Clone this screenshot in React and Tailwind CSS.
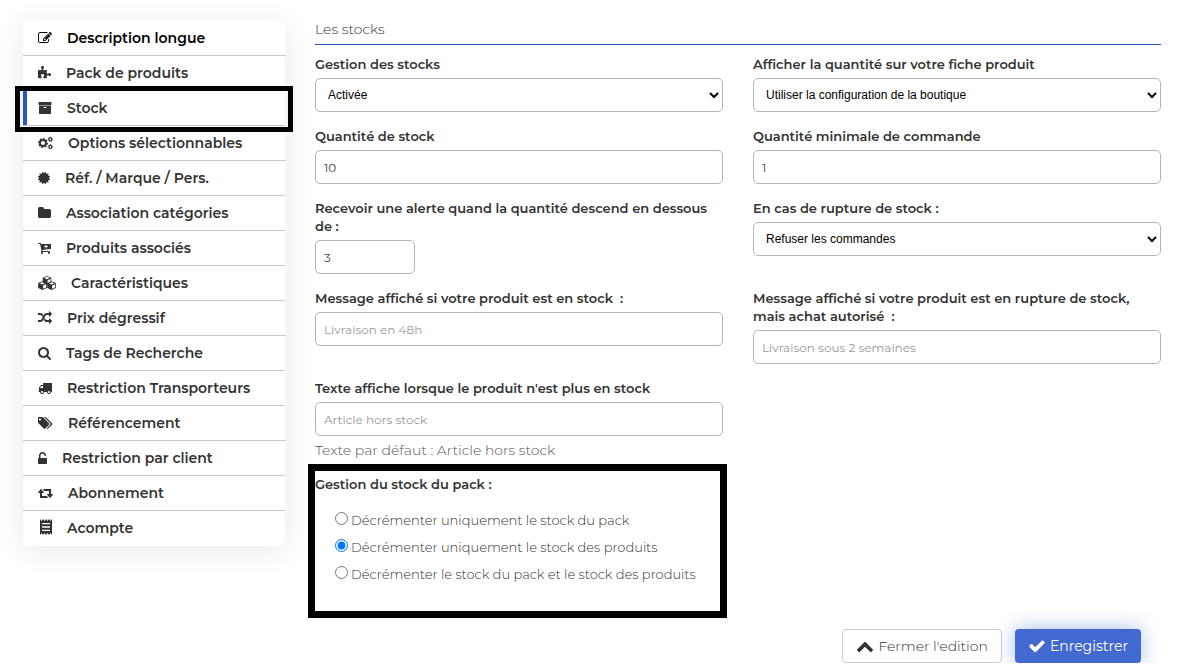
import { useState } from 'react';
import clsx from 'clsx';
import { FaCertificate } from 'react-icons/fa';

const PATHS = {
    edit: 'M888 1184l116-116-152-152-116 116v56h96v96h56zm440-720q-16-16-33 1l-350 350q-17 17-1 33t33-1l350-350q17-17 1-33zm80 594v190q0 119-84.5 203.5t-203.5 84.5h-832q-119 0-203.5-84.5t-84.5-203.5v-832q0-119 84.5-203.5t203.5-84.5h832q63 0 117 25 15 7 18 23 3 17-9 29l-49 49q-14 14-32 8-23-6-45-6h-832q-66 0-113 47t-47 113v832q0 66 47 113t113 47h832q66 0 113-47t47-113v-126q0-13 9-22l64-64q15-15 35-7t20 29zm-96-738l288 288-672 672h-288v-288zm444 132l-92 92-288-288 92-92q28-28 68-28t68 28l152 152q28 28 28 68t-28 68z',
    puzzle: 'M1728 1098q0 81-44.5 135t-123.5 54q-41 0-77.5-17.5t-59-38-56.5-38-71-17.5q-110 0-110 124 0 39 16 115t15 115v5q-22 0-33 1-34 3-97.5 11.5t-115.5 13.5-98 5q-61 0-103-26.5t-42-83.5q0-37 17.5-71t38-56.5 38-59 17.5-77.5q0-79-54-123.5t-135-44.5q-84 0-143 45.5t-59 127.5q0 43 15 83t33.5 64.5 33.5 53 15 50.5q0 45-46 89-37 35-117 35-95 0-245-24-9-2-27.5-4t-27.5-4l-13-2q-1 0-3-1-2 0-2-1v-1024q2 1 17.5 3.5t34 5 21.5 3.5q150 24 245 24 80 0 117-35 46-44 46-89 0-22-15-50.5t-33.5-53-33.5-64.5-15-83q0-82 59-127.5t144-45.5q80 0 134 44.5t54 123.5q0 41-17.5 77.5t-38 59-38 56.5-17.5 71q0 57 42 83.5t103 26.5q64 0 180-15t163-17v2q-1 2-3.5 17.5t-5 34-3.5 21.5q-24 150-24 245 0 80 35 117 44 46 89 46 22 0 50.5-15t53-33.5 64.5-33.5 83-15q82 0 127.5 59t45.5 143z',
    archive: 'M1088 832q0-26-19-45t-45-19h-256q-26 0-45 19t-19 45 19 45 45 19h256q26 0 45-19t19-45zm576-192v960q0 26-19 45t-45 19h-1408q-26 0-45-19t-19-45v-960q0-26 19-45t45-19h1408q26 0 45 19t19 45zm64-448v256q0 26-19 45t-45 19h-1536q-26 0-45-19t-19-45v-256q0-26 19-45t45-19h1536q26 0 45 19t19 45z',
    folder: 'M1728 608v704q0 92-66 158t-158 66h-1216q-92 0-158-66t-66-158v-960q0-92 66-158t158-66h320q92 0 158 66t66 158v32h672q92 0 158 66t66 158z',
    cart: 'M1280 704q0-26-19-45t-45-19h-128v-128q0-26-19-45t-45-19-45 19-19 45v128h-128q-26 0-45 19t-19 45 19 45 45 19h128v128q0 26 19 45t45 19 45-19 19-45v-128h128q26 0 45-19t19-45zm-640 832q0 53-37.5 90.5t-90.5 37.5-90.5-37.5-37.5-90.5 37.5-90.5 90.5-37.5 90.5 37.5 37.5 90.5zm896 0q0 53-37.5 90.5t-90.5 37.5-90.5-37.5-37.5-90.5 37.5-90.5 90.5-37.5 90.5 37.5 37.5 90.5zm128-1088v512q0 24-16 42.5t-41 21.5l-1044 122q1 7 4.5 21.5t6 26.5 2.5 22q0 16-24 64h920q26 0 45 19t19 45-19 45-45 19h-1024q-26 0-45-19t-19-45q0-14 11-39.5t29.5-59.5 20.5-38l-177-823h-204q-26 0-45-19t-19-45 19-45 45-19h256q16 0 28.5 6.5t20 15.5 13 24.5 7.5 26.5 5.5 29.5 4.5 25.5h1201q26 0 45 19t19 45z',
    random: 'M666 481q-60 92-137 273-22-45-37-72.5t-40.5-63.5-51-56.5-63-35-81.5-14.5h-224q-14 0-23-9t-9-23v-192q0-14 9-23t23-9h224q250 0 410 225zm1126 799q0 14-9 23l-320 320q-9 9-23 9-13 0-22.5-9.5t-9.5-22.5v-192q-32 0-85 .5t-81 1-73-1-71-5-64-10.5-63-18.5-58-28.5-59-40-55-53.5-56-69.5q59-93 136-273 22 45 37 72.5t40.5 63.5 51 56.5 63 35 81.5 14.5h256v-192q0-14 9-23t23-9q12 0 24 10l319 319q9 9 9 23zm0-896q0 14-9 23l-320 320q-9 9-23 9-13 0-22.5-9.5t-9.5-22.5v-192h-256q-48 0-87 15t-69 45-51 61.5-45 77.5q-32 62-78 171-29 66-49.5 111t-54 105-64 100-74 83-90 68.5-106.5 42-128 16.5h-224q-14 0-23-9t-9-23v-192q0-14 9-23t23-9h224q48 0 87-15t69-45 51-61.5 45-77.5q32-62 78-171 29-66 49.5-111t54-105 64-100 74-83 90-68.5 106.5-42 128-16.5h256v-192q0-14 9-23t23-9q12 0 24 10l319 319q9 9 9 23z',
    search: 'M1216 832q0-185-131.5-316.5t-316.5-131.5-316.5 131.5-131.5 316.5 131.5 316.5 316.5 131.5 316.5-131.5 131.5-316.5zm512 832q0 52-38 90t-90 38q-54 0-90-38l-343-342q-179 124-399 124-143 0-273.5-55.5t-225-150-150-225-55.5-273.5 55.5-273.5 150-225 225-150 273.5-55.5 273.5 55.5 225 150 150 225 55.5 273.5q0 220-124 399l343 343q37 37 37 90z',
    truck: 'M640 1408q0-52-38-90t-90-38-90 38-38 90 38 90 90 38 90-38 38-90zm-384-512h384v-256h-158q-13 0-22 9l-195 195q-9 9-9 22v30zm1280 512q0-52-38-90t-90-38-90 38-38 90 38 90 90 38 90-38 38-90zm256-1088v1024q0 15-4 26.5t-13.5 18.5-16.5 11.5-23.5 6-22.5 2-25.5 0-22.5-.5q0 106-75 181t-181 75-181-75-75-181h-384q0 106-75 181t-181 75-181-75-75-181h-64q-3 0-22.5.5t-25.5 0-22.5-2-23.5-6-16.5-11.5-13.5-18.5-4-26.5q0-26 19-45t45-19v-320q0-8-.5-35t0-38 2.5-34.5 6.5-37 14-30.5 22.5-30l198-198q19-19 50.5-32t58.5-13h160v-192q0-26 19-45t45-19h1024q26 0 45 19t19 45z',
    tags: 'M384 448q0-53-37.5-90.5t-90.5-37.5-90.5 37.5-37.5 90.5 37.5 90.5 90.5 37.5 90.5-37.5 37.5-90.5zm1067 576q0 53-37 90l-491 492q-39 37-91 37-53 0-90-37l-715-716q-38-37-64.5-101t-26.5-117v-416q0-52 38-90t90-38h416q53 0 117 26.5t102 64.5l715 714q37 39 37 91zm384 0q0 53-37 90l-491 492q-39 37-91 37-36 0-59-14t-53-45l470-470q37-37 37-90 0-52-37-91l-715-714q-38-38-102-64.5t-117-26.5h224q53 0 117 26.5t102 64.5l715 714q37 39 37 91z',
    unlock: 'M1376 896q40 0 68 28t28 68v576q0 40-28 68t-68 28h-960q-40 0-68-28t-28-68v-576q0-40 28-68t68-28h32v-320q0-185 131.5-316.5t316.5-131.5 316.5 131.5 131.5 316.5q0 26-19 45t-45 19h-64q-26 0-45-19t-19-45q0-106-75-181t-181-75-181 75-75 181v320h736z',
    retweet: 'M1280 1504q0 13-9.5 22.5t-22.5 9.5h-960q-8 0-13.5-2t-9-7-5.5-8-3-11.5-1-11.5v-600h-192q-26 0-45-19t-19-45q0-24 15-41l320-384q19-22 49-22t49 22l320 384q15 17 15 41 0 26-19 45t-45 19h-192v384h576q16 0 25 11l160 192q7 10 7 21zm640-416q0 24-15 41l-320 384q-20 23-49 23t-49-23l-320-384q-15-17-15-41 0-26 19-45t45-19h192v-384h-576q-16 0-25-12l-160-192q-7-9-7-20 0-13 9.5-22.5t22.5-9.5h960q8 0 13.5 2t9 7 5.5 8 3 11.5 1 11.5v600h192q26 0 45 19t19 45z',
    receipt: 'M2 0L3.5 2 5 0 6.5 2 8 0 9.500 2 11 0 12.500 2 14 0V16L12.500 14 11 16 9.500 14 8 16 6.500 14 5 16 3.500 14 2 16zM4 4V5.300H12V4zM4 7.300V8.700H12V7.300zM4 10.700V12H12V10.700z',
    chevronUp: 'M1683 1331l-166 165q-19 19-45 19t-45-19l-531-531-531 531q-19 19-45 19t-45-19l-166-165q-19-19-19-45.5t19-45.5l742-741q19-19 45-19t45 19l742 741q19 19 19 45.5t-19 45.5z',
    check: 'M1671 566q0 40-28 68l-724 724-136 136q-28 28-68 28t-68-28l-136-136-362-362q-28-28-28-68t28-68l136-136q28-28 68-28t68 28l294 295 656-657q28-28 68-28t68 28l136 136q28 28 28 68z',
};

const Icon = ({ name, box = '0 0 1792 1792', className = 'w-[14px] h-[14px]' }) => (
    <svg className={clsx('shrink-0', className)} viewBox={box} fill="currentColor" fillRule="evenodd" aria-hidden="true">
        <path d={PATHS[name]} />
    </svg>
);

const CUBE = 'M0-4.200L4.300-2.400V2.400L0 4.500-4.300 2.400V-2.400zM0-3.400L-2.900-2.200 0-1 2.900-2.200zM.6.1V3.300L3.500 1.900V-1.200z';

const CubesIcon = () => (
    <svg className="w-[18px] h-[14px] shrink-0" viewBox="0 0 18 14" fill="currentColor" fillRule="evenodd" aria-hidden="true">
        <path d={CUBE} transform="translate(9 4.200)" />
        <path d={CUBE} transform="translate(4.500 9.500)" />
        <path d={CUBE} transform="translate(13.500 9.500)" />
    </svg>
);

const CogsIcon = () => (
    <svg className="w-[15px] h-[14px] shrink-0" viewBox="0 0 15 14" fill="none" stroke="currentColor" aria-hidden="true">
        <circle cx="5" cy="7" r="3.100" strokeWidth="2" />
        <circle cx="5" cy="7" r="4.400" strokeWidth="1.200" pathLength="16" strokeDasharray="1 1" />
        <circle cx="12.300" cy="3.300" r="1.500" strokeWidth="1.200" />
        <circle cx="12.300" cy="3.300" r="2.300" strokeWidth=".8" pathLength="16" strokeDasharray="1 1" />
        <circle cx="12.300" cy="10.800" r="1.500" strokeWidth="1.200" />
        <circle cx="12.300" cy="10.800" r="2.300" strokeWidth=".8" pathLength="16" strokeDasharray="1 1" />
    </svg>
);

const menu = [
    { label: 'Description longue', icon: <Icon name="edit" /> },
    { label: 'Pack de produits', icon: <Icon name="puzzle" box="64 0 1664 1792" className="w-[13px] h-[14px]" /> },
    { label: 'Stock', icon: <Icon name="archive" /> },
    { label: 'Options sélectionnables', icon: <CogsIcon /> },
    { label: 'Réf. / Marque / Pers.', icon: <FaCertificate className="w-3 h-3 shrink-0" /> },
    { label: 'Association catégories', icon: <Icon name="folder" box="64 0 1664 1792" className="w-[13px] h-[14px]" /> },
    { label: 'Produits associés', icon: <Icon name="cart" box="0 0 1664 1792" className="w-[13px] h-[14px]" /> },
    { label: 'Caractéristiques', icon: <CubesIcon /> },
    { label: 'Prix dégressif', icon: <Icon name="random" /> },
    { label: 'Tags de Recherche', icon: <Icon name="search" box="64 128 1664 1664" className="w-[13px] h-[13px]" /> },
    { label: 'Restriction Transporteurs', icon: <Icon name="truck" /> },
    { label: 'Référencement', icon: <Icon name="tags" box="0 0 1920 1792" className="w-[15px] h-[14px]" /> },
    { label: 'Restriction par client', icon: <Icon name="unlock" box="320 0 1152 1792" className="w-[9px] h-[14px]" /> },
    { label: 'Abonnement', icon: <Icon name="retweet" box="0 0 1920 1792" className="w-[15px] h-[14px]" /> },
    { label: 'Acompte', icon: <Icon name="receipt" box="0 0 14 18" className="w-[14px] h-[18px]" /> },
];

const packOptions = [
    { value: 'pack', label: 'Décrémenter uniquement le stock du pack' },
    { value: 'products', label: 'Décrémenter uniquement le stock des produits' },
    { value: 'both', label: 'Décrémenter le stock du pack et le stock des produits' },
];

const control = 'block h-[34px] rounded-[5px] border border-[#b5b5b5] bg-white';

const Field = ({ id, label, children }) => (
    <div className="mb-[15px]">
        <label htmlFor={id} className="block mb-[5px] text-[13px] leading-[18px] font-semibold">
            {label}
        </label>
        {children}
    </div>
);

const TextField = ({ id, label, className = 'w-full', ...props }) => (
    <Field id={id} label={label}>
        <input
            id={id}
            type="text"
            className={clsx(control, 'px-2 text-xs text-[#444] placeholder:text-[#999]', className)}
            {...props}
        />
    </Field>
);

const SelectField = ({ id, label, options }) => (
    <Field id={id} label={label}>
        <select id={id} className={clsx(control, "w-full pl-2 font-['Liberation_Sans',Arial,sans-serif] text-xs text-black")}>
            {options.map((option) => (
                <option key={option}>{option}</option>
            ))}
        </select>
    </Field>
);

const Sidebar = () => {
    const [active, setActive] = useState('Stock');

    return (
        <nav className="w-[262px] shrink-0 self-start rounded-md bg-white py-px shadow-[0_4px_30px_rgba(0,0,0,0.09)]">
            <ul>
                {menu.map(({ label, icon }, index) => (
                    <li
                        key={label}
                        className={clsx('relative', index < menu.length - 1 && 'border-b border-[#c8c8c8]')}
                    >
                        <a
                            href="#"
                            onClick={() => setActive(label)}
                            className={clsx(
                                'flex h-[34px] items-center gap-[15px] pl-[15px] text-sm font-semibold',
                                index === 0 && 'text-black'
                            )}
                        >
                            {icon}
                            {label}
                        </a>
                        {active === label && (
                            <>
                                <span className="absolute left-0 inset-y-0 w-1 bg-[#2856c6]" />
                                <span className="pointer-events-none absolute -inset-x-2 -top-[5px] -bottom-[7px] z-10 border-5 border-black" />
                            </>
                        )}
                    </li>
                ))}
            </ul>
        </nav>
    );
};

const App = () => {
    const [mode, setMode] = useState('products');

    return (
        <div className="flex gap-[30px] pt-5 pl-[23px] pr-5 bg-white font-[Montserrat,Inter,sans-serif] text-[#333]">
            <Sidebar />

            <main className="flex-1 min-w-0">
                <h2 className="h-[25px] mb-[10px] border-b border-[#2856c6] text-sm leading-[18px] font-light">Les stocks</h2>

                <form onSubmit={(e) => e.preventDefault()}>
                    <div className="grid grid-cols-2 gap-x-[30px]">
                        <SelectField id="management" label="Gestion des stocks" options={['Activée', 'Désactivée']} />
                        <SelectField
                            id="display"
                            label="Afficher la quantité sur votre fiche produit"
                            options={['Utiliser la configuration de la boutique', 'Oui', 'Non']}
                        />
                        <TextField id="quantity" label="Quantité de stock" defaultValue="10" />
                        <TextField id="minimum" label="Quantité minimale de commande" defaultValue="1" />
                        <TextField
                            id="alert"
                            label="Recevoir une alerte quand la quantité descend en dessous de :"
                            defaultValue="3"
                            className="w-[100px]"
                        />
                        <SelectField
                            id="outOfStock"
                            label="En cas de rupture de stock :"
                            options={['Refuser les commandes', 'Accepter les commandes']}
                        />
                        <TextField
                            id="inStockMessage"
                            label={'Message affiché si votre produit est en stock \u00a0:'}
                            placeholder="Livraison en 48h"
                        />
                        <TextField
                            id="backorderMessage"
                            label={'Message affiché si votre produit est en rupture de stock, mais achat autorisé \u00a0:'}
                            placeholder="Livraison sous 2 semaines"
                        />

                        <div>
                            <TextField
                                id="soldOutText"
                                label="Texte affiche lorsque le produit n'est plus en stock"
                                placeholder="Article hors stock"
                            />
                            <p className="-mt-[11px] text-sm leading-5 font-light text-[#555]">Texte par défaut : Article hors stock</p>

                            {/* Pack stock mode */}
                            <fieldset className="mt-1 -ml-[7px] -mr-1 h-[154px] border-7 border-black pt-1">
                                <legend className="float-left mb-[14px] w-full text-[13px] leading-[18px] font-semibold">
                                    Gestion du stock du pack :
                                </legend>
                                <div className="clear-both pl-5">
                                    {packOptions.map(({ value, label }) => (
                                        <label key={value} className="flex h-[27px] items-center gap-[3px] text-[13px] font-light whitespace-nowrap">
                                            <input
                                                type="radio"
                                                name="packMode"
                                                value={value}
                                                checked={mode === value}
                                                onChange={() => setMode(value)}
                                                className="mb-[5px] size-[13px]"
                                            />
                                            {label}
                                        </label>
                                    ))}
                                </div>
                            </fieldset>
                        </div>
                    </div>

                    <div className="mt-[11px] mr-5 flex justify-end gap-[13px] text-sm">
                        <button
                            type="button"
                            className="flex h-[34px] items-center gap-1 rounded border border-[#ccc] bg-white px-[13px] font-light"
                        >
                            <Icon name="chevronUp" className="size-[18px]" />
                            Fermer l'edition
                        </button>
                        <button
                            type="submit"
                            className="flex h-[34px] items-center gap-1 rounded bg-[#4169cf] px-[13px] text-white shadow-[0_0_20px_rgba(65,105,207,0.45)]"
                        >
                            <Icon name="check" className="size-[18px]" />
                            Enregistrer
                        </button>
                    </div>
                </form>
            </main>
        </div>
    );
};

export default App;
